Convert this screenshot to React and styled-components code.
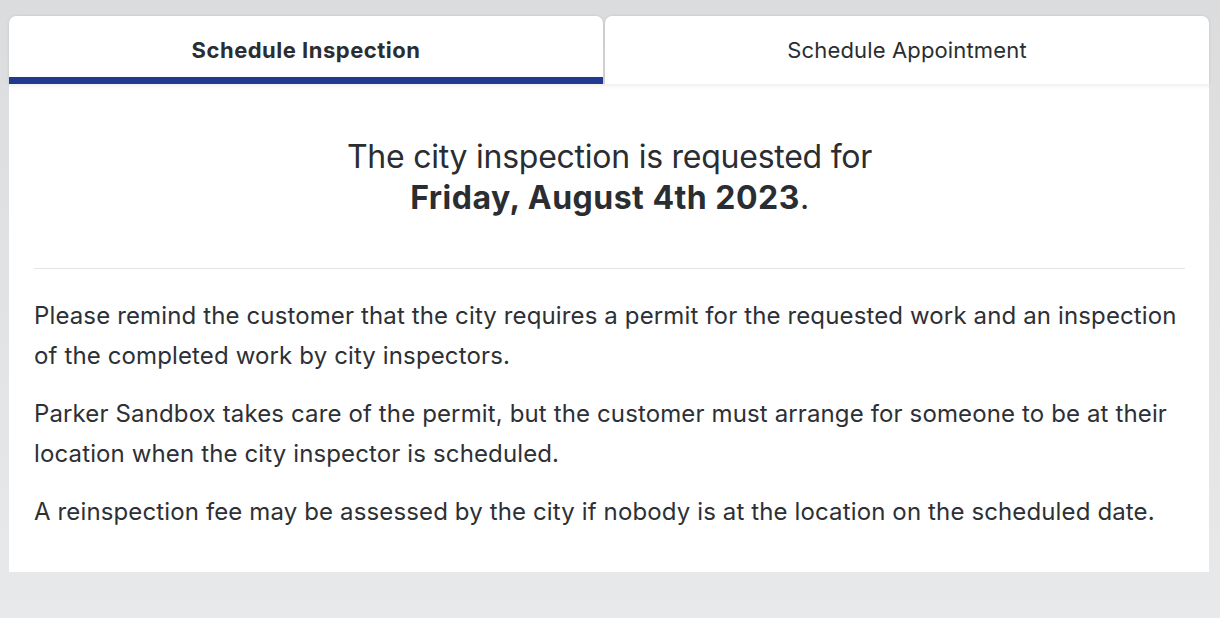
import styled, { createGlobalStyle } from "styled-components";

const GlobalStyle = createGlobalStyle`
  html, body {
    margin: 0;
    padding: 0;
    min-height: 100%;
  }
  body {
    background: linear-gradient(#dadcde, #e8e9eb);
    min-height: 618px;
    font-family: Inter, "Noto Sans", "Liberation Sans", sans-serif;
    color: #2d3035;
  }
`;

const Page = styled.div`
  padding: 16px 11px 0 9px;
`;

const Tabs = styled.div`
  display: grid;
  grid-template-columns: 594px 1fr;
  gap: 2px;
`;

const Tab = styled.button`
  height: 68px;
  border: none;
  margin: 0;
  padding: ${(p) => (p.$active ? "7px 0 0" : "0")};
  background: #fff;
  border-radius: 7px 7px 0 0;
  box-shadow: 0 0 3px rgba(0, 0, 0, 0.12);
  border-bottom: ${(p) => (p.$active ? "7px solid #213a8f" : "none")};
  font-family: inherit;
  font-size: 22px;
  font-weight: ${(p) => (p.$active ? 700 : 400)};
  letter-spacing: ${(p) => (p.$active ? "0.5px" : "0.15px")};
  color: #2a2d31;
  cursor: pointer;
  display: flex;
  align-items: center;
  justify-content: center;
  position: relative;
  z-index: 1;
`;

const Card = styled.section`
  background: #fff;
  padding: 52px 24px 40px 25px;
  position: relative;
  z-index: 2;
  box-shadow: inset 0 6px 6px -6px rgba(0, 0, 0, 0.12);
`;

const Heading = styled.h2`
  margin: 0;
  text-align: center;
  font-size: 32px;
  line-height: 41px;
  font-weight: 400;
  letter-spacing: -0.25px;
  color: #2a2d31;

  strong {
    font-weight: 700;
    letter-spacing: 0.5px;
  }
`;

const Divider = styled.hr`
  border: none;
  border-top: 1px solid #e3e4e6;
  margin: 50px 0 27px;
`;

const Paragraph = styled.p`
  margin: 0 0 18px;
  font-size: 24px;
  line-height: 40px;
  letter-spacing: 0.13px;
  color: #2d3035;

  &:last-child {
    margin-bottom: 0;
  }
`;

export default function App() {
  return (
    <>
      <GlobalStyle />
      <Page>
        <Tabs>
          <Tab $active>Schedule Inspection</Tab>
          <Tab>Schedule Appointment</Tab>
        </Tabs>
        <Card>
          <Heading>
            The city inspection is requested for
            <br />
            <strong>Friday, August 4th 2023</strong>.
          </Heading>
          <Divider />
          <Paragraph>
            Please remind the customer that the city requires a permit for the
            requested work and an inspection of the completed work by city
            inspectors.
          </Paragraph>
          <Paragraph>
            Parker Sandbox takes care of the permit, but the customer must
            arrange for someone to be at their location when the city inspector
            is scheduled.
          </Paragraph>
          <Paragraph>
            A reinspection fee may be assessed by the city if nobody is at the
            location on the scheduled date.
          </Paragraph>
        </Card>
      </Page>
    </>
  );
}
